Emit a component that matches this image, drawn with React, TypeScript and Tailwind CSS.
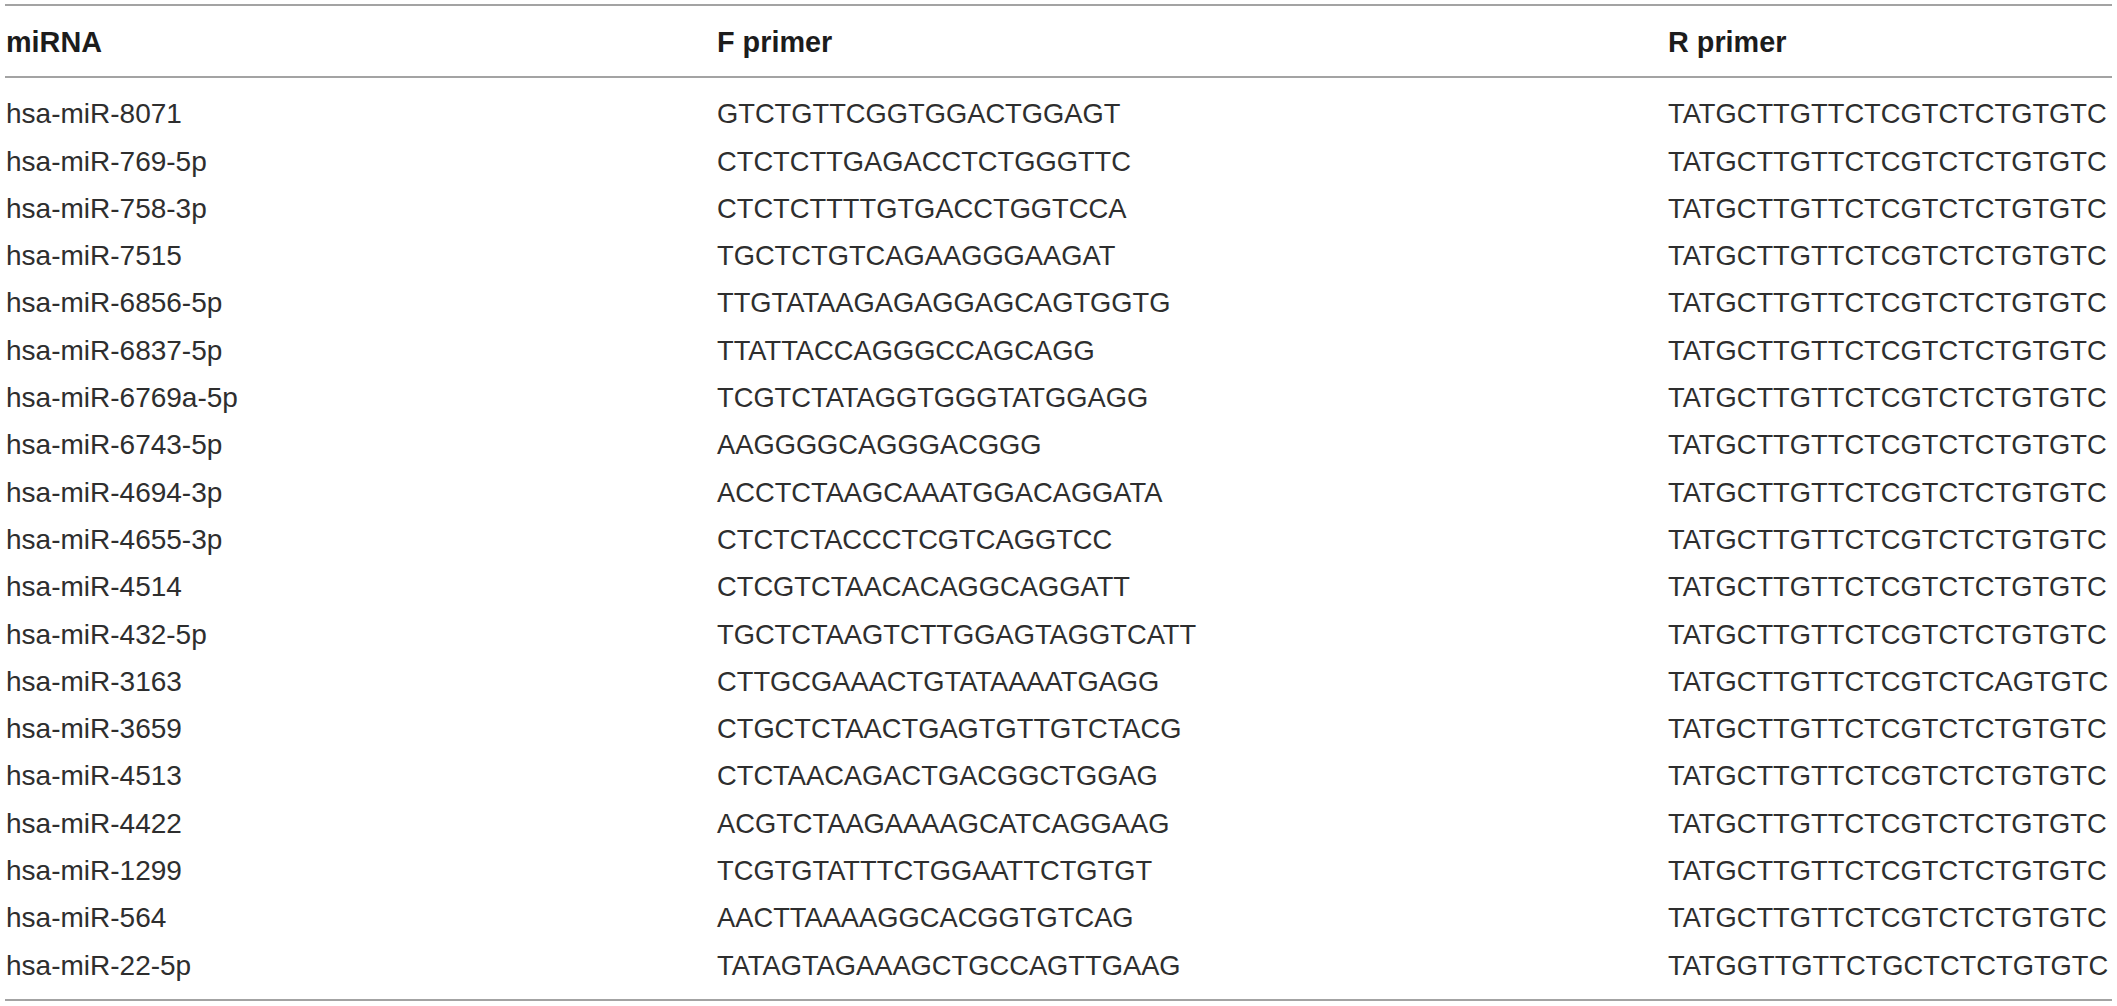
import React from "react";

const rows: [string, string, string][] = [
  ["hsa-miR-8071", "GTCTGTTCGGTGGACTGGAGT", "TATGCTTGTTCTCGTCTCTGTGTC"],
  ["hsa-miR-769-5p", "CTCTCTTGAGACCTCTGGGTTC", "TATGCTTGTTCTCGTCTCTGTGTC"],
  ["hsa-miR-758-3p", "CTCTCTTTTGTGACCTGGTCCA", "TATGCTTGTTCTCGTCTCTGTGTC"],
  ["hsa-miR-7515", "TGCTCTGTCAGAAGGGAAGAT", "TATGCTTGTTCTCGTCTCTGTGTC"],
  ["hsa-miR-6856-5p", "TTGTATAAGAGAGGAGCAGTGGTG", "TATGCTTGTTCTCGTCTCTGTGTC"],
  ["hsa-miR-6837-5p", "TTATTACCAGGGCCAGCAGG", "TATGCTTGTTCTCGTCTCTGTGTC"],
  ["hsa-miR-6769a-5p", "TCGTCTATAGGTGGGTATGGAGG", "TATGCTTGTTCTCGTCTCTGTGTC"],
  ["hsa-miR-6743-5p", "AAGGGGCAGGGACGGG", "TATGCTTGTTCTCGTCTCTGTGTC"],
  ["hsa-miR-4694-3p", "ACCTCTAAGCAAATGGACAGGATA", "TATGCTTGTTCTCGTCTCTGTGTC"],
  ["hsa-miR-4655-3p", "CTCTCTACCCTCGTCAGGTCC", "TATGCTTGTTCTCGTCTCTGTGTC"],
  ["hsa-miR-4514", "CTCGTCTAACACAGGCAGGATT", "TATGCTTGTTCTCGTCTCTGTGTC"],
  ["hsa-miR-432-5p", "TGCTCTAAGTCTTGGAGTAGGTCATT", "TATGCTTGTTCTCGTCTCTGTGTC"],
  ["hsa-miR-3163", "CTTGCGAAACTGTATAAAATGAGG", "TATGCTTGTTCTCGTCTCAGTGTC"],
  ["hsa-miR-3659", "CTGCTCTAACTGAGTGTTGTCTACG", "TATGCTTGTTCTCGTCTCTGTGTC"],
  ["hsa-miR-4513", "CTCTAACAGACTGACGGCTGGAG", "TATGCTTGTTCTCGTCTCTGTGTC"],
  ["hsa-miR-4422", "ACGTCTAAGAAAAGCATCAGGAAG", "TATGCTTGTTCTCGTCTCTGTGTC"],
  ["hsa-miR-1299", "TCGTGTATTTCTGGAATTCTGTGT", "TATGCTTGTTCTCGTCTCTGTGTC"],
  ["hsa-miR-564", "AACTTAAAAGGCACGGTGTCAG", "TATGCTTGTTCTCGTCTCTGTGTC"],
  ["hsa-miR-22-5p", "TATAGTAGAAAGCTGCCAGTTGAAG", "TATGGTTGTTCTGCTCTCTGTGTC"],
];

export default function App() {
  return (
    <div className="bg-white w-[2117px] h-[1006px] pt-[4px] pl-[5px] text-[#1c1c1c] font-['Liberation_Sans',Arial,sans-serif]">
      <div className="w-[2107px] border-t-2 border-b-2 border-[#a3a3a3]">
        <div className="grid grid-cols-[711px_951px_1fr] pl-[1px] pt-[13px] pb-[10px] leading-[47.3px] text-[28.8px] font-bold border-b-2 border-[#a3a3a3]">
          <div>miRNA</div>
          <div>F primer</div>
          <div>R primer</div>
        </div>
        <div className="pt-[12px] pb-[10px] text-[#2e2e2e]">
          {rows.map(([a, b, c]) => (
            <div key={a} className="grid grid-cols-[711px_951px_1fr] pl-[1px] h-[47.3px] leading-[47.3px]">
              <div className="text-[28px]">{a}</div>
              <div className="text-[27.3px]">{b}</div>
              <div className="text-[27.3px]">{c}</div>
            </div>
          ))}
        </div>
      </div>
    </div>
  );
}
